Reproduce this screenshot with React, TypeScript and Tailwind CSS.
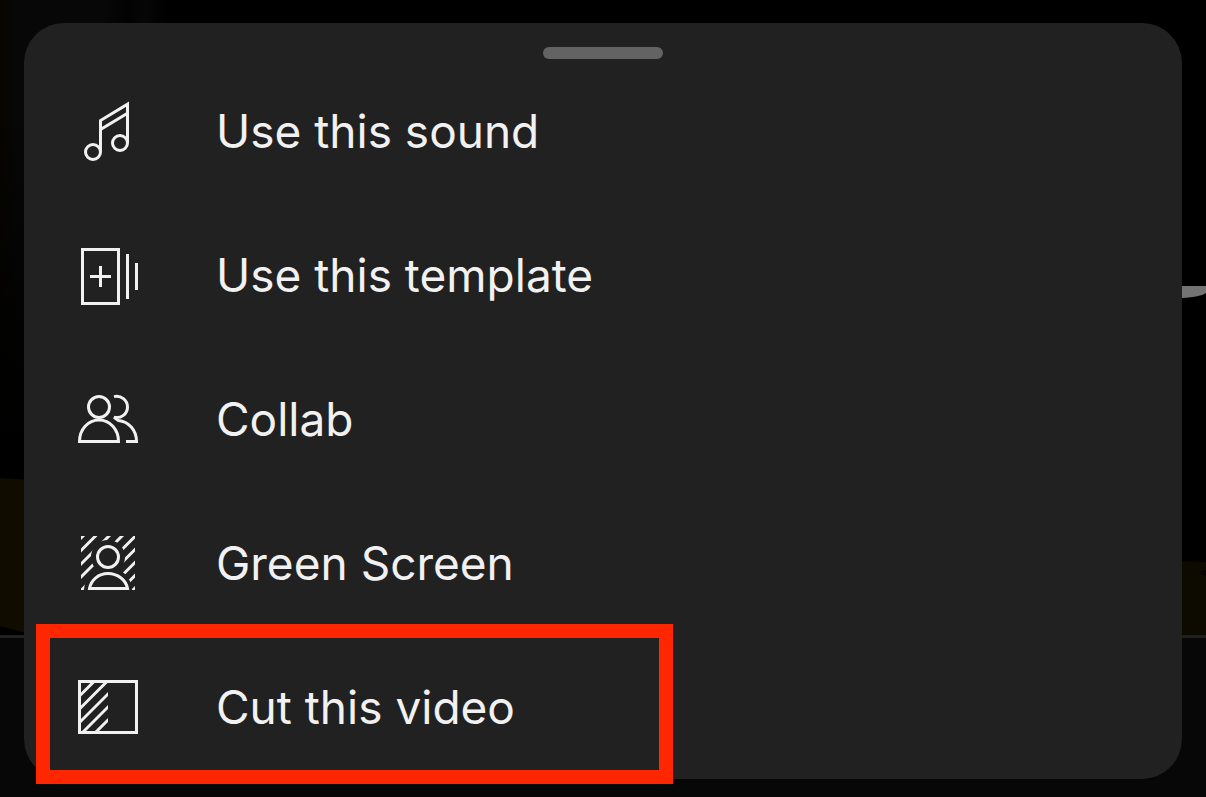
import type { ReactNode } from "react";

function Icon({ children }: { children: ReactNode }) {
  return (
    <svg
      viewBox="0 0 72 72"
      className="size-18 shrink-0"
      fill="none"
      stroke="currentColor"
      strokeWidth="3"
      aria-hidden="true"
    >
      {children}
    </svg>
  );
}

const SoundIcon = () => (
  <Icon>
    <circle cx="21" cy="57" r="7.5" />
    <circle cx="48" cy="48" r="7.5" />
    <path d="M28.5 57V25.5L55.5 9.2V48M28.5 34.5L55.5 18.2" />
  </Icon>
);

const TemplateIcon = () => (
  <Icon>
    <path d="M10.5 10.5h36v54h-36zM28.5 27v21M18 37.5h21M55.5 15v45M64.5 24v27" />
  </Icon>
);

const CollabIcon = () => (
  <Icon>
    <circle cx="27" cy="24" r="10.5" />
    <path d="M7.5 58.5C7.5 46.5 16 37 27 37S46.5 46.5 46.5 58.5Z" />
    <path d="M42 13.6C49 12 55.5 17 55.5 24S49 36 42 34.2L46.5 37.5C56.5 38.5 64.5 47 64.5 58.5H54" />
  </Icon>
);

const GreenScreenIcon = () => (
  <Icon>
    <defs>
      <mask id="person-gap" maskUnits="userSpaceOnUse" x="9" y="9" width="54" height="54">
        <path d="M9 9h54v54H9z" fill="white" stroke="none" />
        <circle cx="36" cy="30" r="17" fill="black" stroke="none" />
        <circle cx="36" cy="64" r="24" fill="black" stroke="none" />
      </mask>
    </defs>
    <path
      mask="url(#person-gap)"
      d="M0 20L20 0M0 32.500L32.500 0M0 46L46 0M0 59L59 0M0 72.500L72.500 0M13.500 72L72 13.500M26.500 72L72 26.500M39.500 72L72 39.500M52 72L72 52"
    />
    <circle cx="36" cy="30" r="10.5" />
    <path d="M17.5 61.5C19 53 26.500 46.500 36 46.500S54 53 55.500 61.500Z" />
  </Icon>
);

const CutIcon = () => (
  <Icon>
    <defs>
      <clipPath id="cut-half">
        <path d="M8 11h28v51H8z" />
      </clipPath>
    </defs>
    <path
      clipPath="url(#cut-half)"
      d="M0 32.5L32.5 0M0 45.5L45.5 0M0 59L59 0M0 72L72 0M13 72L72 13"
    />
    <path d="M7.5 10.5h57v51h-57z" />
  </Icon>
);

const actions = [
  { label: "Use this sound", icon: <SoundIcon /> },
  { label: "Use this template", icon: <TemplateIcon /> },
  { label: "Collab", icon: <CollabIcon /> },
  { label: "Green Screen", icon: <GreenScreenIcon /> },
  { label: "Cut this video", icon: <CutIcon />, highlighted: true },
];

function Backdrop() {
  return (
    <svg
      viewBox="0 0 1206 797"
      preserveAspectRatio="none"
      className="absolute inset-0 size-full"
      aria-hidden="true"
    >
      <defs>
        <linearGradient id="glow" x1="0" x2="1" y1="0" y2="0">
          <stop offset="0" stopColor="#060500" />
          <stop offset="0.12" stopColor="#070707" />
          <stop offset="0.6" stopColor="#070707" />
          <stop offset="0.75" stopColor="#020202" />
          <stop offset="0.85" stopColor="#060606" />
          <stop offset="1" stopColor="#000000" />
        </linearGradient>
        <linearGradient id="fade" x1="0" x2="0" y1="0" y2="1">
          <stop offset="0" stopColor="#000000" stopOpacity="0" />
          <stop offset="1" stopColor="#000000" />
        </linearGradient>
      </defs>
      <path d="M0 0h1206v797H0z" fill="#000000" />
      <path d="M0 0h170v440H0z" fill="url(#glow)" />
      <path d="M0 100h170v340H0z" fill="url(#fade)" />
      <path d="M0 478L30 480V634L0 626z" fill="#110c00" />
      <path d="M1176 561L1206 562V635H1176z" fill="#0d0a00" />
      <path d="M1206 570Q1194 572 1206 576z" fill="#040300" />
      <path d="M1176 286H1206V293Q1198 298 1176 298z" fill="#737373" />
      <path d="M0 638h1206v159H0z" fill="#070707" />
      <path d="M0 635h1206v3H0z" fill="#20201e" />
    </svg>
  );
}

export default function App() {
  return (
    <main className="relative min-h-screen overflow-hidden bg-black px-6 pt-[23px] pb-[18px] font-['Inter','Liberation_Sans',sans-serif] text-[#f1f1f1]">
      <Backdrop />
      <section aria-label="Remix options" className="relative rounded-[40px] bg-[#212121] pt-6">
        <div className="mx-auto h-3 w-30 rounded-md bg-[#636363]" />
        <ul>
          {actions.map(({ label, icon, highlighted }) => (
            <li key={label} className="relative">
              <button type="button" className="flex h-36 w-full items-center gap-18 px-12 text-left text-[46px] leading-none">
                {icon}
                <span>{label}</span>
              </button>
              {highlighted && (
                <div className="pointer-events-none absolute -top-[11px] -bottom-[5px] left-3 w-[637px] border-[14px] border-[#ff2600]" />
              )}
            </li>
          ))}
        </ul>
      </section>
    </main>
  );
}
